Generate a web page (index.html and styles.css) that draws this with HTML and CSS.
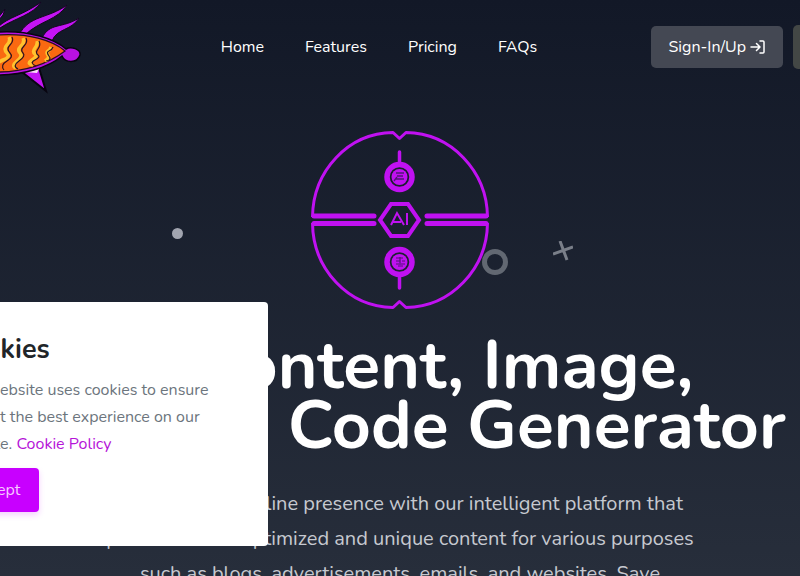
FILE: index.html
```html
<!DOCTYPE html>
<html lang="en">
<head>
<meta charset="utf-8">
<meta name="viewport" content="width=device-width, initial-scale=1">
<title>AI Content Generator</title>
<link rel="stylesheet" href="styles.css">
</head>
<body>
<header class="header">
  <a class="brand" href="#" aria-label="Home page">
    <svg class="brand-logo" viewBox="0 0 84 94" aria-hidden="true">
      <path d="M-2 18 5 9l-2 6-5 6zM-2 27C8 17 24 15 41 2 33 15 15 18 0 28zM19 35C29 15 48 19 67 5 58 20 39 21 25 35zM42 38C50 22 62 29 79 18 71 31 57 28 52 41z" fill="#c414f5" stroke="#140720" stroke-width="1"/>
      <path d="M22 72 46 91 39 68z" fill="#c414f5" stroke="#080510" stroke-width="2"/>
      <path d="M24 72 39 69 37 73z" fill="#fbd9f7"/>
      <path d="M-2 32C29 30 55 39 66 49 71 46 81 49 80 55 77 64 65 63 62 56 48 68 22 75-2 75z" fill="#b811e2" stroke="#080510" stroke-width="1.5"/>
      <path d="M-2 35C28 33 52 40 65 51 48 64 24 72-2 72z" fill="#fa6911" stroke="#2c1020" stroke-width="1.300"/>
      <path d="M9 37q2 4-2 8t0 8-4 7-4 7M23 38q2 4-2 8t-1 7-3 8-1 7M37 41q1 3-2 7t0 6-3 6 1 5M51 47q-1 3-3 4t0 4-3 6" fill="none" stroke="#ffc22e" stroke-width="3.500"/>
      <path d="M12 37q2 4-2 8t0 8-3 8-3 9M26 38q2 4-2 8t-1 7-4 8-1 8M39 41q2 4-1 8t0 6-3 5 1 6M53 47q-1 3-4 4t0 5-3 5" fill="none" stroke="#2d1420" stroke-width="1.200"/>
    </svg>
  </a>
  <nav class="nav" aria-label="Main">
    <a href="#">Home</a>
    <a href="#">Features</a>
    <a href="#">Pricing</a>
    <a href="#">FAQs</a>
  </nav>
  <div class="actions">
    <a class="signin" href="#">Sign-In/Up
      <svg width="16" height="16" viewBox="0 0 16 16" fill="none" stroke="currentColor" stroke-width="1.500" stroke-linecap="round" stroke-linejoin="round" aria-hidden="true"><path d="M1 8h9M6.500 4.500 10 8l-3.500 3.500M10 2h3q1 0 1 1v10q0 1-1 1h-3"/></svg>
    </a>
    <button class="more" type="button" aria-label="Language"></button>
  </div>
</header>
<main class="hero">
  <svg class="emblem" viewBox="0 0 180 180" fill="none" stroke="#c011f1" aria-hidden="true">
    <g stroke-width="3" stroke-linejoin="round">
      <path d="M2.500 87C3 41 38 3 83 2.500l6.500 6 6.500-6c45 .5 81 38.500 81.500 84.500"/>
      <path d="M2.500 93c.5 46 35.500 84 80.500 84.500l6.500-6 6.500 6c45-.5 81-38.500 81.500-84.500"/>
    </g>
    <path d="M4 86h60M4 93.500h60M117 86h59M117 93.500h59" stroke-width="5" stroke-linecap="round"/>
    <path d="M81 74h17l11 16-11 16H81L70 90z" stroke-width="4"/>
    <path d="m81 95 6-12 7 12M83 92h8M97 83v12" stroke-width="2"/>
    <path d="M89.500 22v12M89.500 146v12" stroke-width="3.500" stroke-linecap="round"/>
    <circle cx="89.500" cy="47" r="12.500" stroke-width="5.500"/>
    <circle cx="89.500" cy="47" r="8" fill="#c011f1" stroke="none"/>
    <path d="M86 43h8M87 46h6M86 49h8M84 51l3-4" stroke="#511477" stroke-width="1.300"/>
    <circle cx="89.500" cy="132" r="12.500" stroke-width="5.500"/>
    <circle cx="89.500" cy="132" r="8" fill="#c011f1" stroke="none"/>
    <path d="M86 128h7M86 131h4M92 131h3M86 134h3M91 134h4M88 136h5M90 127v8" stroke="#511477" stroke-width="1.200"/>
  </svg>
  <h1 class="title">AI Content, Image,<br>Audio &amp; Code Generator</h1>
  <p class="lead">Enhance your online presence with our intelligent platform that<br>produces SEO-optimized and unique content for various purposes<br>such as blogs, advertisements, emails, and websites. Save</p>
  <span class="deco dot"></span>
  <span class="deco ring"></span>
  <svg class="deco cross" viewBox="0 0 20 20" stroke="#7a7f89" stroke-width="3" aria-hidden="true"><path d="M0 13 20 6M7 0l7 19"/></svg>
</main>
<section class="cookies" aria-labelledby="cookie-title">
  <h2 id="cookie-title">Cookies</h2>
  <p>This website uses cookies to ensure<br>you get the best experience on our<br>website. <a href="#">Cookie Policy</a></p>
  <button class="accept" type="button">Accept</button>
</section>
</body>
</html>
```

FILE: styles.css
```css
* {
  box-sizing: border-box;
}

body {
  margin: 0;
  height: 100vh;
  overflow: hidden;
  font-family: Nunito, Lato, sans-serif;
  font-size: 16px;
  color: #fff;
  background: linear-gradient(#121827, #272e3b);
}

a {
  color: inherit;
  text-decoration: none;
}

.header {
  display: grid;
  grid-template-columns: 1fr auto 1fr;
  height: 94px;
  align-items: center;
}

.brand-logo {
  display: block;
  width: 84px;
  height: 94px;
}

.nav {
  display: flex;
  gap: 41px;
  margin-right: 42px;
}

.actions {
  display: flex;
  justify-content: flex-end;
  align-items: center;
  gap: 10px;
  min-width: 0;
}

.signin {
  display: flex;
  align-items: center;
  gap: 4px;
  height: 42px;
  padding: 0 17px;
  border-radius: 5px;
  background: #444853;
  white-space: nowrap;
}

.more {
  flex: none;
  width: 44px;
  height: 44px;
  margin-right: -37px;
  border: 0;
  border-radius: 5px;
  background: #434745;
}

.hero {
  display: flex;
  flex-direction: column;
  align-items: center;
  padding-top: 36px;
  text-align: center;
  white-space: nowrap;
}

.emblem {
  width: 180px;
  height: 180px;
}

.title {
  margin: 26px 0 0;
  font-size: 68px;
  font-weight: 700;
  line-height: 60px;
}

.lead {
  margin: 30px 0 0;
  font-size: 20px;
  line-height: 35px;
  color: #c6c9d0;
}

.deco {
  position: absolute;
}

.dot {
  left: 172px;
  top: 228px;
  width: 11px;
  height: 11px;
  border-radius: 50%;
  background: #a2a5b0;
}

.ring {
  left: 482px;
  top: 249px;
  width: 26px;
  height: 26px;
  border: 5px solid #626872;
  border-radius: 50%;
}

.cross {
  left: 553px;
  top: 241px;
  width: 20px;
  height: 20px;
}

.cookies {
  position: fixed;
  left: -84px;
  bottom: 30px;
  width: 352px;
  padding: 31px 36px 34px;
  border-radius: 4px;
  background: #fff;
  color: #6c757d;
}

.cookies h2 {
  margin: 0 0 10px;
  font-size: 27px;
  line-height: 34px;
  color: #212529;
}

.cookies p {
  margin: 0 0 10px;
  line-height: 27px;
  white-space: nowrap;
}

.cookies a {
  color: #b514d8;
}

.accept {
  height: 44px;
  padding: 0 19px;
  border: 0;
  border-radius: 4px;
  font: inherit;
  color: #f7c9ff;
  background: #c800ff;
  box-shadow: 0 3px 6px #c800ff30;
}
```
